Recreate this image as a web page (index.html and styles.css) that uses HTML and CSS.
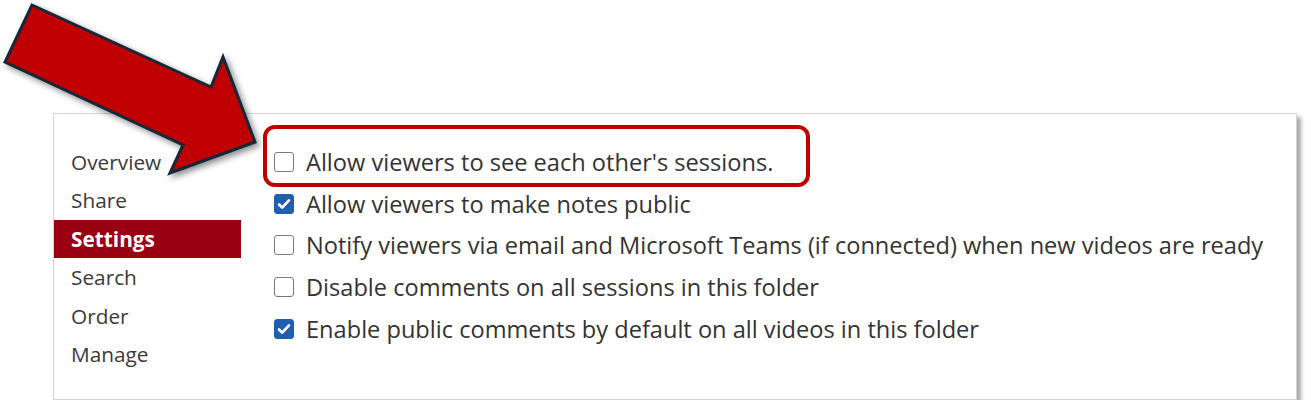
FILE: index.html
```html
<!DOCTYPE html>
<html lang="en">
<head>
    <meta charset="UTF-8">
    <meta name="viewport" content="width=device-width, initial-scale=1.0">
    <title>Folder Settings</title>
    <link rel="stylesheet" href="styles.css">
</head>
<body>
    <div class="panel">
        <ul class="side-nav">
            <li>Overview</li>
            <li>Share</li>
            <li class="active">Settings</li>
            <li>Search</li>
            <li>Order</li>
            <li>Manage</li>
        </ul>

        <div class="settings">
            <label class="option">
                <span class="box"></span>
                Allow viewers to see each other's sessions.
            </label>
            <label class="option">
                <span class="box checked">
                    <svg viewBox="0 0 20 20"><path d="M4.5 10.5l3.5 3.5 7.5-8" /></svg>
                </span>
                Allow viewers to make notes public
            </label>
            <label class="option">
                <span class="box"></span>
                Notify viewers via email and Microsoft Teams (if connected) when new videos are ready
            </label>
            <label class="option">
                <span class="box"></span>
                Disable comments on all sessions in this folder
            </label>
            <label class="option">
                <span class="box checked">
                    <svg viewBox="0 0 20 20"><path d="M4.5 10.5l3.5 3.5 7.5-8" /></svg>
                </span>
                Enable public comments by default on all videos in this folder
            </label>
        </div>
    </div>

    <!-- callout annotations drawn over the screenshot -->
    <div class="callout-box"></div>
    <svg class="callout-arrow" width="270" height="190" viewBox="0 0 270 190">
        <polygon points="32,5 211,87 223,57 255,142 170,173 183,145 5,62" />
    </svg>
</body>
</html>
```

FILE: styles.css
```css
body {
    font-family: "Open Sans", "Noto Sans", Arial, sans-serif;
    margin: 0;
    padding: 0;
    background-color: #ffffff;
    color: #333;
}

.panel {
    display: flex;
    margin: 113px 0 0 53px;
    width: 1244px;
    height: 287px;
    box-sizing: border-box;
    border: 1px solid #d4d4d4;
    background-color: #fff;
    box-shadow: 4px 4px 4px rgba(0, 0, 0, 0.35);
}

.side-nav {
    list-style: none;
    margin: 0;
    padding: 29px 0 0 0;
    width: 187px;
}

.side-nav li {
    height: 38.4px;
    line-height: 38.4px;
    padding-left: 17px;
    font-size: 20.8px;
    color: #3a3a3a;
}

.side-nav li.active {
    background-color: #990012;
    color: #fff;
    font-weight: bold;
}

.settings {
    display: flex;
    flex-direction: column;
    padding: 27px 0 0 33px;
}

.option {
    display: flex;
    align-items: center;
    height: 41.75px;
    font-size: 23.6px;
    color: #333;
    white-space: nowrap;
}

.box {
    display: flex;
    flex-shrink: 0;
    align-items: center;
    justify-content: center;
    width: 20px;
    height: 20px;
    box-sizing: border-box;
    border: 1.5px solid #7a7a7a;
    border-radius: 3px;
    margin-right: 12px;
}

.box.checked {
    background-color: #1f5fb2;
    border-color: #1f5fb2;
}

.box svg {
    width: 18px;
    height: 18px;
    fill: none;
    stroke: #fff;
    stroke-width: 3;
    stroke-linecap: round;
    stroke-linejoin: round;
}

.callout-box {
    position: absolute;
    left: 263px;
    top: 125px;
    width: 547px;
    height: 62px;
    box-sizing: border-box;
    border: 4px solid #c00000;
    border-radius: 12px;
}

.callout-arrow {
    position: absolute;
    left: 0;
    top: 0;
    filter: drop-shadow(3px 3px 3px rgba(0, 0, 0, 0.45));
}

.callout-arrow polygon {
    fill: #c00000;
    stroke: #14283a;
    stroke-width: 3;
    stroke-linejoin: miter;
}
```
